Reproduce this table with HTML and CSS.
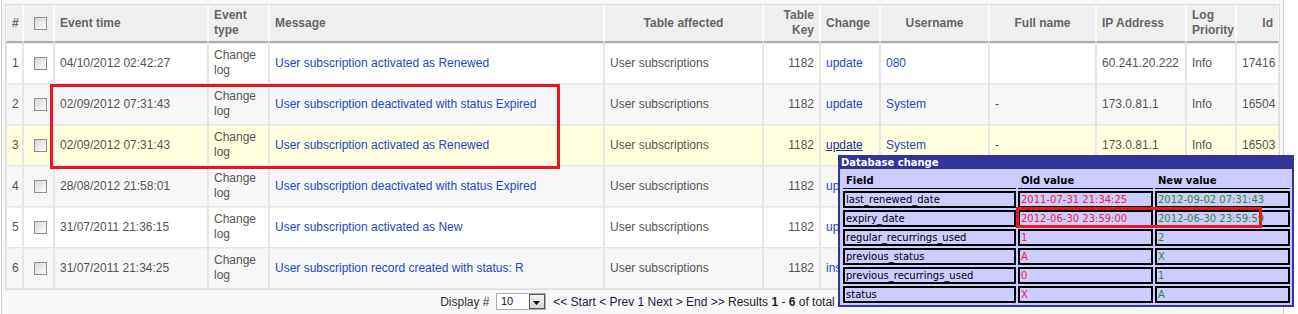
FILE: index.html
```html
<!DOCTYPE html>
<html>
<head>
<meta charset="utf-8">
<title>Event log</title>
<link rel="stylesheet" href="styles.css">
</head>
<body>
<div class="page">
  <table class="log">
    <colgroup>
      <col class="c-num"><col class="c-cb"><col class="c-time"><col class="c-type"><col class="c-msg"><col class="c-tbl"><col class="c-key"><col class="c-chg"><col class="c-user"><col class="c-full"><col class="c-ip"><col class="c-prio"><col class="c-id">
    </colgroup>
    <thead>
      <tr>
        <th class="left">#</th>
        <th class="cb"><input type="checkbox" class="chk"></th>
        <th class="left">Event time</th>
        <th class="left">Event type</th>
        <th class="left">Message</th>
        <th class="center">Table affected</th>
        <th class="right">Table Key</th>
        <th class="left">Change</th>
        <th class="center">Username</th>
        <th class="center">Full name</th>
        <th class="left">IP Address</th>
        <th class="left">Log Priority</th>
        <th class="right">Id</th>
      </tr>
    </thead>
    <tbody>
      <tr class="r-odd">
        <td>1</td><td class="cb"><input type="checkbox" class="chk"></td>
        <td>04/10/2012 02:42:27</td><td>Change log</td>
        <td><a class="lnk">User subscription activated as Renewed</a></td>
        <td>User subscriptions</td><td class="right">1182</td>
        <td><a class="lnk">update</a></td><td><a class="lnk">080</a></td><td></td>
        <td>60.241.20.222</td><td>Info</td><td class="right">17416</td>
      </tr>
      <tr class="r-even">
        <td>2</td><td class="cb"><input type="checkbox" class="chk"></td>
        <td>02/09/2012 07:31:43</td><td>Change log</td>
        <td><a class="lnk">User subscription deactivated with status Expired</a></td>
        <td>User subscriptions</td><td class="right">1182</td>
        <td><a class="lnk">update</a></td><td><a class="lnk">System</a></td><td><a class="lnk">-</a></td>
        <td>173.0.81.1</td><td>Info</td><td class="right">16504</td>
      </tr>
      <tr class="r-hover">
        <td>3</td><td class="cb"><input type="checkbox" class="chk"></td>
        <td>02/09/2012 07:31:43</td><td>Change log</td>
        <td><a class="lnk">User subscription activated as Renewed</a></td>
        <td>User subscriptions</td><td class="right">1182</td>
        <td><a class="lnk active">update</a></td><td><a class="lnk">System</a></td><td><a class="lnk">-</a></td>
        <td>173.0.81.1</td><td>Info</td><td class="right">16503</td>
      </tr>
      <tr class="r-even">
        <td>4</td><td class="cb"><input type="checkbox" class="chk"></td>
        <td>28/08/2012 21:58:01</td><td>Change log</td>
        <td><a class="lnk">User subscription deactivated with status Expired</a></td>
        <td>User subscriptions</td><td class="right">1182</td>
        <td><a class="lnk">update</a></td><td></td><td></td>
        <td></td><td></td><td></td>
      </tr>
      <tr class="r-odd">
        <td>5</td><td class="cb"><input type="checkbox" class="chk"></td>
        <td>31/07/2011 21:36:15</td><td>Change log</td>
        <td><a class="lnk">User subscription activated as New</a></td>
        <td>User subscriptions</td><td class="right">1182</td>
        <td><a class="lnk">update</a></td><td></td><td></td>
        <td></td><td></td><td></td>
      </tr>
      <tr class="r-even">
        <td>6</td><td class="cb"><input type="checkbox" class="chk"></td>
        <td>31/07/2011 21:34:25</td><td>Change log</td>
        <td><a class="lnk">User subscription record created with status: R</a></td>
        <td>User subscriptions</td><td class="right">1182</td>
        <td><a class="lnk">insert</a></td><td></td><td></td>
        <td></td><td></td><td></td>
      </tr>
    </tbody>
  </table>

  <div class="pager">
    <span class="lbl">Display #</span>
    <span class="select"><span class="select-val">10</span><span class="select-btn"><svg width="7" height="4" viewBox="0 0 7 4"><path d="M0 0H7L3.5 4Z" fill="#000"/></svg></span></span>
    <span class="nav">&lt;&lt; Start &lt; Prev 1 Next &gt; End &gt;&gt;</span>
    <span class="res">Results <b>1</b> - <b>6</b> of total <b>6</b></span>
  </div>

  <div class="mark mark-rows"></div>

  <div class="popup">
    <div class="popup-title">Database change</div>
    <table class="diff">
      <colgroup><col class="d-field"><col class="d-old"><col class="d-new"></colgroup>
      <thead>
        <tr><th>Field</th><th>Old value</th><th>New value</th></tr>
      </thead>
      <tbody>
        <tr><td>last_renewed_date</td><td class="old">2011-07-31 21:34:25</td><td class="new">2012-09-02 07:31:43</td></tr>
        <tr><td>expiry_date</td><td class="old">2012-06-30 23:59:00</td><td class="new">2012-06-30 23:59:59</td></tr>
        <tr><td>regular_recurrings_used</td><td class="old">1</td><td class="new">2</td></tr>
        <tr><td>previous_status</td><td class="old">A</td><td class="new">X</td></tr>
        <tr><td>previous_recurrings_used</td><td class="old">0</td><td class="new">1</td></tr>
        <tr><td>status</td><td class="old">X</td><td class="new">A</td></tr>
      </tbody>
    </table>
  </div>

  <div class="mark mark-diff"></div>
</div>
</body>
</html>
```
FILE: styles.css
```css
* { box-sizing: border-box; }

body {
  margin: 0;
  background: #ffffff;
  font-family: "Liberation Sans", Arial, sans-serif;
}

.page {
  position: relative;
  width: 1283px;
  height: 314px;
  margin-left: 1px;
  padding: 4px 3px 0 3px;
  border-left: 1px solid #cfcfcf;
  border-right: 1px solid #cfcfcf;
  background: #f7f7f7;
}

/* main log table */
.log {
  width: 1275px;
  table-layout: fixed;
  border-collapse: separate;
  border-spacing: 0;
  border: 1px solid #dcdcdc;
  background: #ffffff;
  font-size: 12px;
  line-height: 15px;
  color: #555555;
}

.c-num  { width: 17px; }
.c-cb   { width: 31px; }
.c-time { width: 154px; }
.c-type { width: 61px; }
.c-msg  { width: 335px; }
.c-tbl  { width: 159px; }
.c-key  { width: 57px; }
.c-chg  { width: 60px; }
.c-user { width: 109px; }
.c-full { width: 107px; }
.c-ip   { width: 90px; }
.c-prio { width: 50px; }
.c-id   { width: 43px; }

.log th {
  background: #efefef;
  color: #666666;
  font-weight: bold;
  padding: 2px 5px 2px 5px;
  border-left: 1px solid #fbfbfb;
  border-right: 1px solid #fbfbfb;
  border-bottom: 2px solid #ababab;
  vertical-align: middle;
  height: 38px;
}

.log td {
  padding: 4px 5px 5px 5px;
  border: 1px solid #e6e6e6;
  border-top-color: #efefef;
  vertical-align: middle;
  height: 41px;
}

.left { text-align: left; }
.center { text-align: center; }
.right { text-align: right; }

.log th.cb, .log td.cb {
  padding: 0 0 0 10px;
  text-align: left;
}

.chk {
  -webkit-appearance: none;
  appearance: none;
  display: block;
  width: 13px;
  height: 13px;
  margin: 0;
  border: 1px solid #8e8f8f;
  background: linear-gradient(135deg, #d6d6d6 0%, #ececec 55%, #fbfbfb 100%);
}

.r-odd td { background: #ffffff; }
.r-even td { background: #f7f7f7; }
.r-hover td { background: #ffffdf; }

.lnk {
  color: #2348c6;
  text-decoration: none;
}
.lnk.active {
  color: #1b2c9c;
  text-decoration: underline;
}

/* pager */
.pager {
  width: 1275px;
  padding-top: 3px;
  text-align: center;
  font-size: 12px;
  line-height: 18px;
  color: #222222;
}
.pager .lbl { color: #333333; }
.pager .nav { color: #1f1a4a; }
.select {
  display: inline-flex;
  vertical-align: middle;
  width: 50px;
  height: 17px;
  margin: 0 4px 0 3px;
  border: 1px solid #a5acb5;
  background: #ffffff;
  position: relative;
  top: -1px;
}
.select-val {
  flex: 1;
  font-size: 11px;
  line-height: 15px;
  padding-left: 4px;
  text-align: left;
  color: #111;
}
.select-btn {
  width: 16px;
  height: 15px;
  border: 1px solid #5a5a5a;
  background: linear-gradient(#f4f4f4, #d6d6d6);
  display: flex;
  align-items: center;
  justify-content: center;
  padding-top: 2px;
}

/* annotations */
.mark {
  position: absolute;
  border: 3px solid #e8161f;
  z-index: 5;
}
.mark-rows {
  left: 48px;
  top: 84px;
  width: 510px;
  height: 85px;
}
.mark-diff {
  left: 1014px;
  top: 207px;
  width: 246px;
  height: 21px;
}

/* popup */
.popup {
  position: absolute;
  left: 836px;
  top: 155px;
  width: 456px;
  border: 2px solid #333399;
  background: #ccccff;
  font-family: "DejaVu Sans", Verdana, sans-serif;
  font-size: 10px;
  color: #000000;
  z-index: 4;
}
.popup-title {
  background: #333399;
  color: #ffffff;
  font-weight: bold;
  line-height: 12px;
  padding: 0 1px;
}
.diff {
  width: 451px;
  margin: 0 0 0 1px;
  table-layout: fixed;
  border-collapse: separate;
  border-spacing: 2px;
}
.d-field { width: 173px; }
.d-old { width: 135px; }
.d-new { width: 135px; }

.diff th {
  text-align: left;
  font-weight: bold;
  padding: 3px 3px 1px 3px;
  line-height: 13px;
  border-bottom: 1px solid #000000;
}
.diff td {
  border: 2px solid #000000;
  padding: 0 1px;
  line-height: 13px;
  height: 17px;
  white-space: nowrap;
}
.diff td.old { color: #f0203c; }
.diff td.new { color: #2b8a2b; }
```
